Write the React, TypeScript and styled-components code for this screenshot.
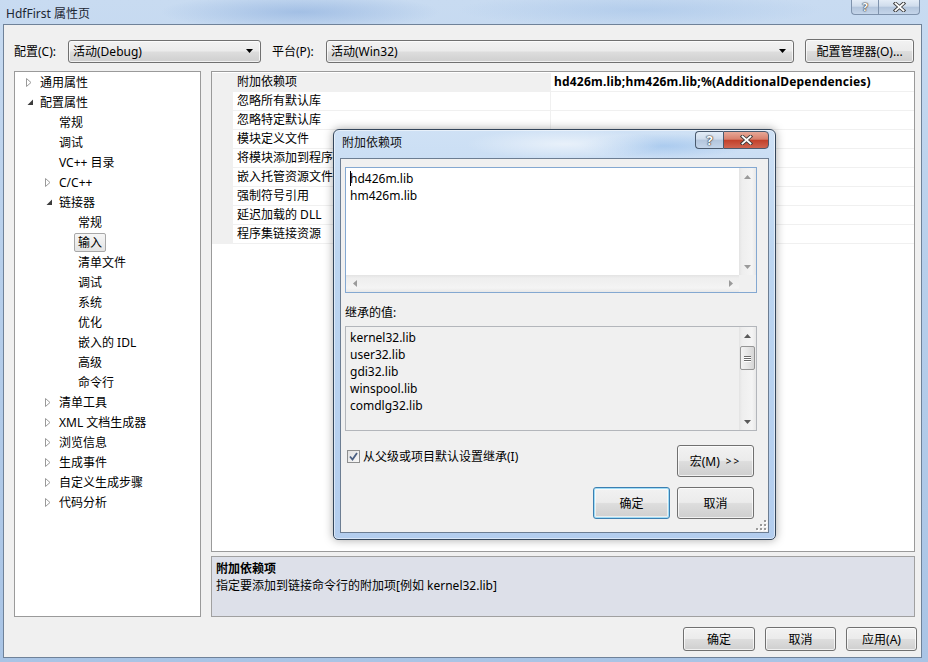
import React, { FC } from 'react';
import styled, { createGlobalStyle, css } from 'styled-components';

const GlobalStyle = createGlobalStyle`
  html, body {
    margin: 0;
    padding: 0;
  }

  body {
    width: 928px;
    height: 662px;
    overflow: hidden;
    font-family: 'Noto Sans', 'Noto Sans CJK SC', sans-serif;
    font-size: 12px;
    color: #000;
  }
`;

// Win7 push button look, shared by buttons and combos
const aeroFace = css`
  border: 1px solid #707070;
  border-radius: 3px;
  background: linear-gradient(180deg, #f2f2f2 0%, #ebebeb 48%, #dddddd 52%, #cfcfcf 100%);
  box-shadow: inset 0 0 0 1px rgba(255, 255, 255, 0.7);
  box-sizing: border-box;
`;

const SWindow = styled.div`
  position: relative;
  display: flex;
  flex-direction: column;
  width: 928px;
  height: 662px;
  box-sizing: border-box;
  background:
    radial-gradient(ellipse 200px 26px at 300px 12px, rgba(118, 158, 214, 0.45), transparent 70%),
    radial-gradient(ellipse 260px 24px at 640px 10px, rgba(150, 185, 228, 0.4), transparent 70%),
    linear-gradient(180deg, #c8dbf1 0%, #b7cfeb 40%, #a9c4e5 100%);
`;

const STitleBar = styled.div`
  display: flex;
  align-items: flex-start;
  height: 24px;
  flex: none;

  .title {
    padding: 6px 0 0 6px;
    line-height: 16px;
    color: #1c2633;
  }
`;

const SCaption = styled.div<{ $size: 'main' | 'dialog' }>`
  display: flex;
  margin-left: auto;
  margin-right: ${({ $size }) => $size === 'main' ? '8px' : '0'};
  height: ${({ $size }) => $size === 'main' ? '15px' : '18px'};
  margin-top: ${({ $size }) => $size === 'main' ? '0' : '1px'};
`;

const SCapButton = styled.div<{ $kind: 'help' | 'close'; $active?: boolean; $w: number }>`
  display: flex;
  align-items: center;
  justify-content: center;
  width: ${({ $w }) => $w}px;
  box-sizing: border-box;
  border: 1px solid ${({ $active }) => $active ? '#4a5a6e' : '#7f93ad'};
  border-top: ${({ $active }) => $active ? '1px solid #4a5a6e' : 'none'};
  color: #fff;
  font-weight: bold;
  font-size: ${({ $active }) => $active ? '13px' : '11px'};
  line-height: 12px;
  text-shadow: 0 0 1px #333, 0 0 1px #333, 0 0 2px #444;

  ${({ $kind, $active }) => $kind === 'help' ? css`
    border-right: none;
    border-radius: ${$active ? '4px 0 0 4px' : '0 0 0 4px'};
    background: linear-gradient(180deg, #e3ecf6 0%, #cfdcec 45%, #b3c5dc 50%, #c4d5ea 100%);
  ` : css`
    border-radius: ${$active ? '0 4px 4px 0' : '0 0 4px 0'};
    background: ${$active
      ? 'linear-gradient(180deg, #e7a898 0%, #d8806c 45%, #c2412b 52%, #d06450 100%)'
      : 'linear-gradient(180deg, #e3ecf6 0%, #cfdcec 45%, #b3c5dc 50%, #c4d5ea 100%)'};
  `}
`;

const SClient = styled.div`
  flex: 1;
  display: flex;
  flex-direction: column;
  margin: 0 6px 4px 3px;
  background: #f0f0f0;
  border: 1px solid #6f8299;
`;

const SToolbar = styled.div`
  display: flex;
  align-items: center;
  height: 24px;
  margin: 14px 0 8px;
  padding-left: 10px;
`;

const SLabel = styled.span<{ $width: number; $gap?: number }>`
  width: ${({ $width }) => $width}px;
  margin-left: ${({ $gap }) => $gap || 0}px;
  flex: none;
  white-space: nowrap;
`;

const SCombo = styled.div<{ $width: number }>`
  ${aeroFace};
  display: flex;
  align-items: center;
  width: ${({ $width }) => $width}px;
  height: 23px;
  padding: 0 7px 0 4px;

  span {
    flex: 1;
  }
`;

const SButton = styled.div<{ $width: number; $height: number; $default?: boolean; $gap?: number }>`
  ${aeroFace};
  display: flex;
  align-items: center;
  justify-content: center;
  width: ${({ $width }) => $width}px;
  height: ${({ $height }) => $height}px;
  margin-left: ${({ $gap }) => $gap || 0}px;
  flex: none;
  white-space: nowrap;

  .more {
    margin-left: 6px;
    font-size: 10px;
    letter-spacing: 2px;
  }

  ${({ $default }) => $default && css`
    border-color: #3c7fb1;
    box-shadow: inset 0 0 0 1px #9fdcf6, inset 0 0 0 2px rgba(255, 255, 255, 0.6);
  `}
`;

const SMain = styled.div`
  display: flex;
  height: 546px;
  padding: 0 6px 0 10px;
  gap: 10px;
`;

const STree = styled.div`
  width: 187px;
  flex: none;
  box-sizing: border-box;
  border: 1px solid #9a9a9a;
  background: #fff;
`;

const STreeRow = styled.div<{ $level: number }>`
  display: flex;
  align-items: center;
  height: 20px;
  padding-left: ${({ $level }) => 11 + $level * 19}px;

  .arrow {
    display: flex;
    align-items: center;
    width: 10px;
    flex: none;
  }
`;

const STreeLabel = styled.span<{ $selected?: boolean }>`
  padding: 0 3px;
  line-height: 17px;
  border: 1px solid transparent;
  border-radius: 2px;
  white-space: nowrap;

  ${({ $selected }) => $selected && css`
    border-color: #a8a8a8;
    background: linear-gradient(180deg, #f6f6f6, #e4e4e4);
  `}
`;

const SRightPane = styled.div`
  display: flex;
  flex-direction: column;
  width: 704px;
  gap: 4px;
`;

const SGrid = styled.div`
  height: 481px;
  box-sizing: border-box;
  padding-top: 1px;
  border: 1px solid #9a9a9a;
  background: #fff;
`;

const SGridRow = styled.div`
  display: flex;
  height: 19px;

  .gutter {
    width: 21px;
    flex: none;
    background: #f0f0f0;
  }
`;

const SNameCell = styled.div<{ $selected?: boolean }>`
  width: 318px;
  flex: none;
  box-sizing: border-box;
  padding-left: 4px;
  line-height: 18px;
  border-bottom: 1px solid #f0f0f0;
  border-right: 1px solid #f0f0f0;
  background: ${({ $selected }) => $selected ? '#f0f0f0' : '#fff'};
  white-space: nowrap;
  overflow: hidden;
`;

const SValueCell = styled.div`
  flex: 1;
  padding-left: 3px;
  line-height: 18px;
  border-bottom: 1px solid #f0f0f0;
  font-weight: bold;
  letter-spacing: 0.2px;
  white-space: nowrap;
`;

const SDesc = styled.div`
  flex: 1;
  box-sizing: border-box;
  padding: 3px 4px;
  border: 1px solid #a0a0a0;
  background: #dde0e9;
  line-height: 17px;

  b {
    display: block;
  }
`;

const SFooter = styled.div`
  display: flex;
  justify-content: flex-end;
  align-items: flex-start;
  gap: 10px;
  height: 40px;
  box-sizing: border-box;
  padding: 10px 4px 0 0;
`;

// Dialog floats over the property page
const SDialog = styled.div`
  position: absolute;
  left: 333px;
  top: 129px;
  width: 443px;
  height: 411px;
  display: flex;
  flex-direction: column;
  box-sizing: border-box;
  padding: 0 6px 6px;
  border: 1px solid #34465b;
  border-radius: 6px 6px 5px 5px;
  background:
    radial-gradient(ellipse 140px 22px at 230px 14px, rgba(255, 255, 255, 0.55), transparent 70%),
    radial-gradient(ellipse 120px 18px at 330px 16px, rgba(150, 190, 235, 0.6), transparent 70%),
    linear-gradient(180deg, #cfe1f5 0%, #bcd5f0 30%, #b3cdee 100%);
  box-shadow: 0 0 10px rgba(0, 0, 0, 0.35), inset 0 0 0 1px rgba(255, 255, 255, 0.5);
`;

const SDialogTitle = styled.div`
  display: flex;
  align-items: flex-start;
  height: 28px;
  flex: none;

  .title {
    padding: 5px 0 0 2px;
    line-height: 16px;
    color: #111;
  }
`;

const SDialogClient = styled.div`
  position: relative;
  flex: 1;
  display: flex;
  flex-direction: column;
  padding: 8px 11px 0 4px;
  border: 1px solid #6c7d92;
  background: #f0f0f0;
`;

const SEditBox = styled.div`
  display: grid;
  grid-template-columns: 1fr 17px;
  grid-template-rows: 1fr 17px;
  height: 126px;
  box-sizing: border-box;
  border: 1px solid #84a8d1;
  background: #fff;
`;

const SLines = styled.div`
  padding: 2px 4px;
  line-height: 17px;

  .caret {
    display: inline-block;
    width: 1px;
    height: 15px;
    margin-right: -1px;
    vertical-align: -3px;
    background: #000;
  }
`;

const SListBox = styled.div`
  display: grid;
  grid-template-columns: 1fr 17px;
  height: 105px;
  margin-top: 5px;
  box-sizing: border-box;
  border: 1px solid #b3b6bb;
  background: #f0f0f0;
`;

const SScroll = styled.div<{ $dir: 'v' | 'h' }>`
  display: flex;
  flex-direction: ${({ $dir }) => $dir === 'v' ? 'column' : 'row'};
  align-items: center;
  background: ${({ $dir }) => $dir === 'v'
    ? 'linear-gradient(90deg, #e3e3e3 0, #eeeeee 3px, #f4f4f4 13px, #e8e8e8 17px)'
    : 'linear-gradient(180deg, #e3e3e3 0, #eeeeee 3px, #f4f4f4 13px, #e8e8e8 17px)'};

  .arrow {
    display: flex;
    align-items: center;
    justify-content: center;
    width: 17px;
    height: 17px;
    flex: none;
  }

  .fill {
    flex: 1;
  }
`;

const SThumb = styled.div`
  display: flex;
  flex-direction: column;
  align-items: center;
  justify-content: center;
  gap: 1px;
  width: 15px;
  height: 24px;
  margin-top: 2px;
  box-sizing: border-box;
  border: 1px solid #959595;
  border-radius: 2px;
  background: linear-gradient(90deg, #f3f3f3, #e6e6e6 50%, #d6d6d6);

  i {
    width: 7px;
    height: 1px;
    background: #6a6a6a;
    box-shadow: 0 1px 0 #fff;
  }
`;

const SCorner = styled.div`
  background: #f0f0f0;
`;

const SSection = styled.div`
  margin-top: 12px;
  line-height: 16px;
`;

const SOptions = styled.div`
  display: flex;
  justify-content: space-between;
  align-items: flex-start;
  margin-top: 14px;
  padding-right: 3px;
`;

const SCheck = styled.label`
  display: flex;
  align-items: center;
  gap: 3px;
  margin: 4px 0 0 2px;
  line-height: 15px;

  .box {
    display: flex;
    align-items: center;
    justify-content: center;
    width: 13px;
    height: 13px;
    box-sizing: border-box;
    border: 1px solid #8e8f8f;
    background: linear-gradient(135deg, #e1e1e1, #f8f8f8);
  }
`;

const SDialogButtons = styled.div`
  display: flex;
  justify-content: flex-end;
  gap: 7px;
  margin-top: 10px;
  padding-right: 3px;
`;

const SGrip = styled.svg`
  position: absolute;
  right: 1px;
  bottom: 1px;
`;

const Arrow: FC<{ dir: 'up' | 'down' | 'left' | 'right'; color: string }> = ({ dir, color }) => {
  const paths = {
    up: 'M0 4 L3.5 0 L7 4 Z',
    down: 'M0 0 L7 0 L3.5 4 Z',
    left: 'M4 0 L4 7 L0 3.5 Z',
    right: 'M0 0 L4 3.5 L0 7 Z'
  };
  const vertical = dir === 'up' || dir === 'down';
  return (
    <svg width={vertical ? 7 : 4} height={vertical ? 4 : 7}>
      <path d={paths[dir]} fill={color} />
    </svg>
  );
};

const CloseGlyph: FC = () => (
  <svg width='13' height='10' viewBox='0 0 13 10'>
    <path d='M2.5 1.5 L10.5 8.5 M10.5 1.5 L2.5 8.5' stroke='#3b3b3b' strokeWidth='3.6' strokeLinecap='square' />
    <path d='M2.5 1.5 L10.5 8.5 M10.5 1.5 L2.5 8.5' stroke='#fff' strokeWidth='1.8' strokeLinecap='square' />
  </svg>
);

type TreeItem = { label: string; level: number; arrow?: 'open' | 'closed'; selected?: boolean };

const treeItems: TreeItem[] = [
  { label: '通用属性', level: 0, arrow: 'closed' },
  { label: '配置属性', level: 0, arrow: 'open' },
  { label: '常规', level: 1 },
  { label: '调试', level: 1 },
  { label: 'VC++ 目录', level: 1 },
  { label: 'C/C++', level: 1, arrow: 'closed' },
  { label: '链接器', level: 1, arrow: 'open' },
  { label: '常规', level: 2 },
  { label: '输入', level: 2, selected: true },
  { label: '清单文件', level: 2 },
  { label: '调试', level: 2 },
  { label: '系统', level: 2 },
  { label: '优化', level: 2 },
  { label: '嵌入的 IDL', level: 2 },
  { label: '高级', level: 2 },
  { label: '命令行', level: 2 },
  { label: '清单工具', level: 1, arrow: 'closed' },
  { label: 'XML 文档生成器', level: 1, arrow: 'closed' },
  { label: '浏览信息', level: 1, arrow: 'closed' },
  { label: '生成事件', level: 1, arrow: 'closed' },
  { label: '自定义生成步骤', level: 1, arrow: 'closed' },
  { label: '代码分析', level: 1, arrow: 'closed' }
];

const gridRows: [string, string][] = [
  ['附加依赖项', 'hd426m.lib;hm426m.lib;%(AdditionalDependencies)'],
  ['忽略所有默认库', ''],
  ['忽略特定默认库', ''],
  ['模块定义文件', ''],
  ['将模块添加到程序集', ''],
  ['嵌入托管资源文件', ''],
  ['强制符号引用', ''],
  ['延迟加载的 DLL', ''],
  ['程序集链接资源', '']
];

const inherited = ['kernel32.lib', 'user32.lib', 'gdi32.lib', 'winspool.lib', 'comdlg32.lib'];

const TreeArrow: FC<{ kind?: 'open' | 'closed' }> = ({ kind }) => {
  if (kind === 'closed') {
    return (
      <svg width='6' height='9'>
        <path d='M0.5 0.5 L5 4.5 L0.5 8.5 Z' fill='#fff' stroke='#9a9a9a' />
      </svg>
    );
  }
  if (kind === 'open') {
    return (
      <svg width='7' height='7' style={{ marginLeft: 1 }}>
        <path d='M6 0.5 L6 6 L0.5 6 Z' fill='#3c3c3c' />
      </svg>
    );
  }
  return null;
};

const App: FC = () => (
  <SWindow>
    <GlobalStyle />
    <STitleBar>
      <span className='title'>HdfFirst 属性页</span>
      <SCaption $size='main'>
        <SCapButton $kind='help' $w={27}>?</SCapButton>
        <SCapButton $kind='close' $w={42}><CloseGlyph /></SCapButton>
      </SCaption>
    </STitleBar>

    <SClient>
      <SToolbar>
        <SLabel $width={54}>配置(C):</SLabel>
        <SCombo $width={193}>
          <span>活动(Debug)</span>
          <Arrow dir='down' color='#000' />
        </SCombo>
        <SLabel $width={54} $gap={11}>平台(P):</SLabel>
        <SCombo $width={468}>
          <span>活动(Win32)</span>
          <Arrow dir='down' color='#000' />
        </SCombo>
        <SButton $width={109} $height={24} $gap={11}>配置管理器(O)...</SButton>
      </SToolbar>

      <SMain>
        <STree>
          {treeItems.map((item, i) => (
            <STreeRow key={i} $level={item.level}>
              <span className='arrow'><TreeArrow kind={item.arrow} /></span>
              <STreeLabel $selected={item.selected}>{item.label}</STreeLabel>
            </STreeRow>
          ))}
        </STree>

        <SRightPane>
          <SGrid>
            {gridRows.map(([name, value], i) => (
              <SGridRow key={name}>
                <div className='gutter' />
                <SNameCell $selected={i === 0}>{name}</SNameCell>
                <SValueCell>{value}</SValueCell>
              </SGridRow>
            ))}
          </SGrid>
          <SDesc>
            <b>附加依赖项</b>
            指定要添加到链接命令行的附加项[例如 kernel32.lib]
          </SDesc>
        </SRightPane>
      </SMain>

      <SFooter>
        <SButton $width={72} $height={24}>确定</SButton>
        <SButton $width={71} $height={24}>取消</SButton>
        <SButton $width={71} $height={24}>应用(A)</SButton>
      </SFooter>
    </SClient>

    <SDialog>
      <SDialogTitle>
        <span className='title'>附加依赖项</span>
        <SCaption $size='dialog'>
          <SCapButton $kind='help' $w={28} $active>?</SCapButton>
          <SCapButton $kind='close' $w={46} $active><CloseGlyph /></SCapButton>
        </SCaption>
      </SDialogTitle>

      <SDialogClient>
        <SEditBox>
          <SLines>
            <div><span className='caret' />hd426m.lib</div>
            <div>hm426m.lib</div>
          </SLines>
          <SScroll $dir='v'>
            <span className='arrow'><Arrow dir='up' color='#9a9a9a' /></span>
            <span className='fill' />
            <span className='arrow'><Arrow dir='down' color='#9a9a9a' /></span>
          </SScroll>
          <SScroll $dir='h'>
            <span className='arrow'><Arrow dir='left' color='#9a9a9a' /></span>
            <span className='fill' />
            <span className='arrow'><Arrow dir='right' color='#9a9a9a' /></span>
          </SScroll>
          <SCorner />
        </SEditBox>

        <SSection>继承的值:</SSection>
        <SListBox>
          <SLines>
            {inherited.map(lib => <div key={lib}>{lib}</div>)}
          </SLines>
          <SScroll $dir='v'>
            <span className='arrow'><Arrow dir='up' color='#5a5a5a' /></span>
            <SThumb><i /><i /><i /></SThumb>
            <span className='fill' />
            <span className='arrow'><Arrow dir='down' color='#5a5a5a' /></span>
          </SScroll>
        </SListBox>

        <SOptions>
          <SCheck>
            <span className='box'>
              <svg width='9' height='9'>
                <path d='M1 4.5 L3.5 7.5 L8 1' fill='none' stroke='#4a5f82' strokeWidth='1.8' />
              </svg>
            </span>
            从父级或项目默认设置继承(I)
          </SCheck>
          <SButton $width={77} $height={32}>宏(M)<span className='more'>&gt;&gt;</span></SButton>
        </SOptions>

        <SDialogButtons>
          <SButton $width={77} $height={32} $default>确定</SButton>
          <SButton $width={77} $height={32}>取消</SButton>
        </SDialogButtons>

        <SGrip width='11' height='11'>
          {[[8, 0], [8, 4], [4, 4], [8, 8], [4, 8], [0, 8]].map(([x, y]) => (
            <g key={`${x}-${y}`}>
              <rect x={x + 1} y={y + 1} width='2' height='2' fill='#fff' />
              <rect x={x} y={y} width='2' height='2' fill='#9a9a9a' />
            </g>
          ))}
        </SGrip>
      </SDialogClient>
    </SDialog>
  </SWindow>
);

export default App;
